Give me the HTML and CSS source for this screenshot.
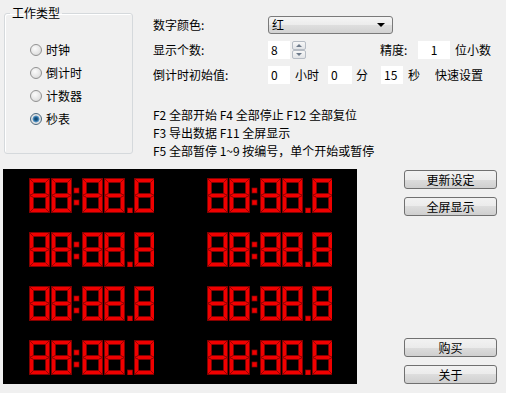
FILE: index.html
```html
<!DOCTYPE html>
<html lang="zh-CN">
<head>
<meta charset="utf-8">
<title>秒表</title>
<link rel="stylesheet" href="styles.css">
</head>
<body>
<div class="app">
  <div class="top">
    <fieldset class="group">
      <legend>工作类型</legend>
      <div class="radios">
        <div class="radio"><span class="dot"></span>时钟</div>
        <div class="radio"><span class="dot"></span>倒计时</div>
        <div class="radio"><span class="dot"></span>计数器</div>
        <div class="radio checked"><span class="dot"></span>秒表</div>
      </div>
    </fieldset>
    <div class="form">
      <div class="row">
        <span class="lbl">数字颜色:</span>
        <div class="select"><span>红</span><span class="arrow"></span></div>
      </div>
      <div class="row">
        <span class="lbl">显示个数:</span>
        <span class="input w22">8</span>
        <span class="spin"><span class="up"></span><span class="down"></span></span>
        <span class="prec">精度:</span>
        <span class="input w32 c">1</span>
        <span class="unit">位小数</span>
      </div>
      <div class="row">
        <span class="lbl">倒计时初始值:</span>
        <span class="input w22">0</span><span class="u1">小时</span>
        <span class="input w24">0</span><span class="u2">分</span>
        <span class="input w22">15</span><span class="u3">秒</span>
        <span class="quick">快速设置</span>
      </div>
      <div class="keys">
        <div>F2 全部开始 F4 全部停止 F12 全部复位</div>
        <div>F3 导出数据 F11 全屏显示</div>
        <div>F5 全部暂停 1~9 按编号，单个开始或暂停</div>
      </div>
    </div>
  </div>
  <div class="bottom">
    <div class="panel">
      <svg class="clock" viewBox="0 0 125 35" role="img" aria-label="88:88.8"><use href="#seg8" x="0" width="21" height="35"/><use href="#seg8" x="22" width="21" height="35"/><rect class="pt" x="45" y="10" width="5" height="5"/><rect class="pt" x="45" y="22" width="5" height="5"/><use href="#seg8" x="53" width="21" height="35"/><use href="#seg8" x="75" width="21" height="35"/><rect class="pt" x="98.5" y="30" width="5" height="5"/><use href="#seg8" x="105" width="21" height="35"/></svg>
      <svg class="clock" viewBox="0 0 125 35" role="img" aria-label="88:88.8"><use href="#seg8" x="0" width="21" height="35"/><use href="#seg8" x="22" width="21" height="35"/><rect class="pt" x="45" y="10" width="5" height="5"/><rect class="pt" x="45" y="22" width="5" height="5"/><use href="#seg8" x="53" width="21" height="35"/><use href="#seg8" x="75" width="21" height="35"/><rect class="pt" x="98.5" y="30" width="5" height="5"/><use href="#seg8" x="105" width="21" height="35"/></svg>
      <svg class="clock" viewBox="0 0 125 35" role="img" aria-label="88:88.8"><use href="#seg8" x="0" width="21" height="35"/><use href="#seg8" x="22" width="21" height="35"/><rect class="pt" x="45" y="10" width="5" height="5"/><rect class="pt" x="45" y="22" width="5" height="5"/><use href="#seg8" x="53" width="21" height="35"/><use href="#seg8" x="75" width="21" height="35"/><rect class="pt" x="98.5" y="30" width="5" height="5"/><use href="#seg8" x="105" width="21" height="35"/></svg>
      <svg class="clock" viewBox="0 0 125 35" role="img" aria-label="88:88.8"><use href="#seg8" x="0" width="21" height="35"/><use href="#seg8" x="22" width="21" height="35"/><rect class="pt" x="45" y="10" width="5" height="5"/><rect class="pt" x="45" y="22" width="5" height="5"/><use href="#seg8" x="53" width="21" height="35"/><use href="#seg8" x="75" width="21" height="35"/><rect class="pt" x="98.5" y="30" width="5" height="5"/><use href="#seg8" x="105" width="21" height="35"/></svg>
      <svg class="clock" viewBox="0 0 125 35" role="img" aria-label="88:88.8"><use href="#seg8" x="0" width="21" height="35"/><use href="#seg8" x="22" width="21" height="35"/><rect class="pt" x="45" y="10" width="5" height="5"/><rect class="pt" x="45" y="22" width="5" height="5"/><use href="#seg8" x="53" width="21" height="35"/><use href="#seg8" x="75" width="21" height="35"/><rect class="pt" x="98.5" y="30" width="5" height="5"/><use href="#seg8" x="105" width="21" height="35"/></svg>
      <svg class="clock" viewBox="0 0 125 35" role="img" aria-label="88:88.8"><use href="#seg8" x="0" width="21" height="35"/><use href="#seg8" x="22" width="21" height="35"/><rect class="pt" x="45" y="10" width="5" height="5"/><rect class="pt" x="45" y="22" width="5" height="5"/><use href="#seg8" x="53" width="21" height="35"/><use href="#seg8" x="75" width="21" height="35"/><rect class="pt" x="98.5" y="30" width="5" height="5"/><use href="#seg8" x="105" width="21" height="35"/></svg>
      <svg class="clock" viewBox="0 0 125 35" role="img" aria-label="88:88.8"><use href="#seg8" x="0" width="21" height="35"/><use href="#seg8" x="22" width="21" height="35"/><rect class="pt" x="45" y="10" width="5" height="5"/><rect class="pt" x="45" y="22" width="5" height="5"/><use href="#seg8" x="53" width="21" height="35"/><use href="#seg8" x="75" width="21" height="35"/><rect class="pt" x="98.5" y="30" width="5" height="5"/><use href="#seg8" x="105" width="21" height="35"/></svg>
      <svg class="clock" viewBox="0 0 125 35" role="img" aria-label="88:88.8"><use href="#seg8" x="0" width="21" height="35"/><use href="#seg8" x="22" width="21" height="35"/><rect class="pt" x="45" y="10" width="5" height="5"/><rect class="pt" x="45" y="22" width="5" height="5"/><use href="#seg8" x="53" width="21" height="35"/><use href="#seg8" x="75" width="21" height="35"/><rect class="pt" x="98.5" y="30" width="5" height="5"/><use href="#seg8" x="105" width="21" height="35"/></svg>
    </div>
    <div class="buttons">
      <div class="bgroup"><button type="button">更新设定</button><button type="button">全屏显示</button></div>
      <div class="bgroup"><button type="button">购买</button><button type="button">关于</button></div>
    </div>
  </div>
</div>
<svg class="defs" aria-hidden="true">
  <defs>
    <symbol id="seg8" viewBox="0 0 21 35">
      <g fill="#f00000" stroke="#8a0000" stroke-width="0.7" stroke-linejoin="round">
        <polygon points="0.5,0.5 20.5,0.5 16.5,4.5 4.5,4.5"/>
        <polygon points="0.5,0.5 4.5,4.5 4.5,15.5 0.5,17.5"/>
        <polygon points="20.5,0.5 20.5,17.5 16.5,15.5 16.5,4.5"/>
        <polygon points="0.5,17.5 4.5,15.5 16.5,15.5 20.5,17.5 16.5,19.5 4.5,19.5"/>
        <polygon points="0.5,17.5 4.5,19.5 4.5,30.5 0.5,34.5"/>
        <polygon points="20.5,17.5 20.5,34.5 16.5,30.5 16.5,19.5"/>
        <polygon points="0.5,34.5 4.5,30.5 16.5,30.5 20.5,34.5"/>
      </g>
    </symbol>
  </defs>
</svg>
</body>
</html>
```

FILE: styles.css
```css
html, body {
  margin: 0;
  padding: 0;
}
body {
  width: 506px;
  height: 393px;
  overflow: hidden;
  background: #f0f0f0;
  color: #000;
  font-family: "Noto Sans CJK SC", "Noto Sans", sans-serif;
  font-size: 12px;
  line-height: 16px;
}
.app {
  display: flex;
  flex-direction: column;
}
.top {
  display: flex;
  height: 169px;
  box-sizing: border-box;
  padding: 6px 0 0 4px;
}
.group {
  margin: 0;
  padding: 0 0 0 5px;
  width: 129px;
  height: 148px;
  box-sizing: border-box;
  border: 1px solid #d5d9dc;
  border-radius: 3px;
  box-shadow: inset 1px 1px 0 #fff;
}
.group legend {
  padding: 0 2px;
  line-height: 14px;
}
.radios {
  padding-top: 18px;
  margin-left: 20px;
}
.radio {
  display: flex;
  align-items: center;
  gap: 4px;
  height: 23px;
}
.dot {
  width: 12px;
  height: 12px;
  box-sizing: border-box;
  border-radius: 50%;
  border: 1px solid #929292;
  background: radial-gradient(circle at 40% 35%, #fbfbfb 0, #e6e6e6 55%, #cfcfcf 100%);
}
.checked .dot {
  border-color: #4d6a80;
  background: radial-gradient(circle, #0e3f66 0, #1f5f90 1.8px, #6aa6d4 3.2px, #e3e3e3 3.8px, #d2d2d2 100%);
}
.form {
  margin-left: 20px;
  padding-top: 9px;
  display: flex;
  flex-direction: column;
}
.row {
  display: flex;
  align-items: center;
  height: 20px;
  margin-bottom: 5px;
  white-space: nowrap;
}
.lbl {
  width: 115px;
}
.select {
  width: 125px;
  height: 18px;
  box-sizing: border-box;
  border: 1px solid #7a7a7a;
  border-radius: 3px;
  background: linear-gradient(#f5f5f5 0, #ececec 50%, #dfdfdf 50%, #d2d2d2 100%);
  display: flex;
  align-items: center;
  justify-content: space-between;
  padding: 0 7px 0 3px;
}
.arrow {
  width: 0;
  height: 0;
  border-left: 4px solid transparent;
  border-right: 4px solid transparent;
  border-top: 4px solid #000;
}
.input {
  background: #fff;
  height: 18px;
  box-sizing: border-box;
  padding-left: 3px;
  line-height: 18px;
}
.w22 { width: 22px; }
.w24 { width: 24px; }
.w32 { width: 32px; }
.c { text-align: center; padding-left: 0; }
.spin {
  width: 14px;
  height: 18px;
  margin-left: 2px;
  display: flex;
  flex-direction: column;
}
.spin span {
  flex: 1;
  box-sizing: border-box;
  border: 1px solid #b6bcc4;
  border-radius: 2px;
  background: linear-gradient(#f7f7f7, #e2e4e7);
  display: flex;
  align-items: center;
  justify-content: center;
}
.spin .up::after {
  content: "";
  border-left: 3px solid transparent;
  border-right: 3px solid transparent;
  border-bottom: 3px solid #6d7a8a;
}
.spin .down::after {
  content: "";
  border-left: 3px solid transparent;
  border-right: 3px solid transparent;
  border-top: 3px solid #6d7a8a;
}
.prec {
  margin-left: 74px;
  width: 38px;
}
.unit {
  margin-left: 5px;
}
.u1 { margin: 0 9px 0 5px; }
.u2 { margin: 0 13px 0 4px; }
.u3 { margin: 0 15px 0 5px; }
.keys {
  margin-top: 16px;
  line-height: 18px;
  white-space: nowrap;
}
.bottom {
  display: flex;
  padding-left: 3px;
}
.panel {
  width: 354px;
  height: 215px;
  box-sizing: border-box;
  background: #000;
  display: grid;
  grid-template-columns: 125px 125px;
  column-gap: 53px;
  row-gap: 19px;
  align-content: start;
  padding: 9px 0 0 26px;
}
.clock {
  display: block;
  width: 125px;
  height: 35px;
}
.pt {
  fill: #f00000;
  stroke: #8a0000;
  stroke-width: 0.7;
}
.buttons {
  margin-left: 47px;
  width: 93px;
  height: 215px;
  box-sizing: border-box;
  padding-top: 1px;
  display: flex;
  flex-direction: column;
  justify-content: space-between;
}
.bgroup {
  display: flex;
  flex-direction: column;
  gap: 8px;
}
.bgroup button {
  width: 93px;
  height: 19px;
  padding: 0;
  margin: 0;
  border: 1px solid #707070;
  border-radius: 3px;
  background: linear-gradient(#f2f2f2 0, #ebebeb 50%, #dddddd 50%, #cfcfcf 100%);
  font-family: "Noto Sans CJK SC", "Noto Sans", sans-serif;
  font-size: 12px;
  line-height: 17px;
  color: #000;
}
.defs {
  display: block;
  width: 0;
  height: 0;
  overflow: hidden;
}
```
